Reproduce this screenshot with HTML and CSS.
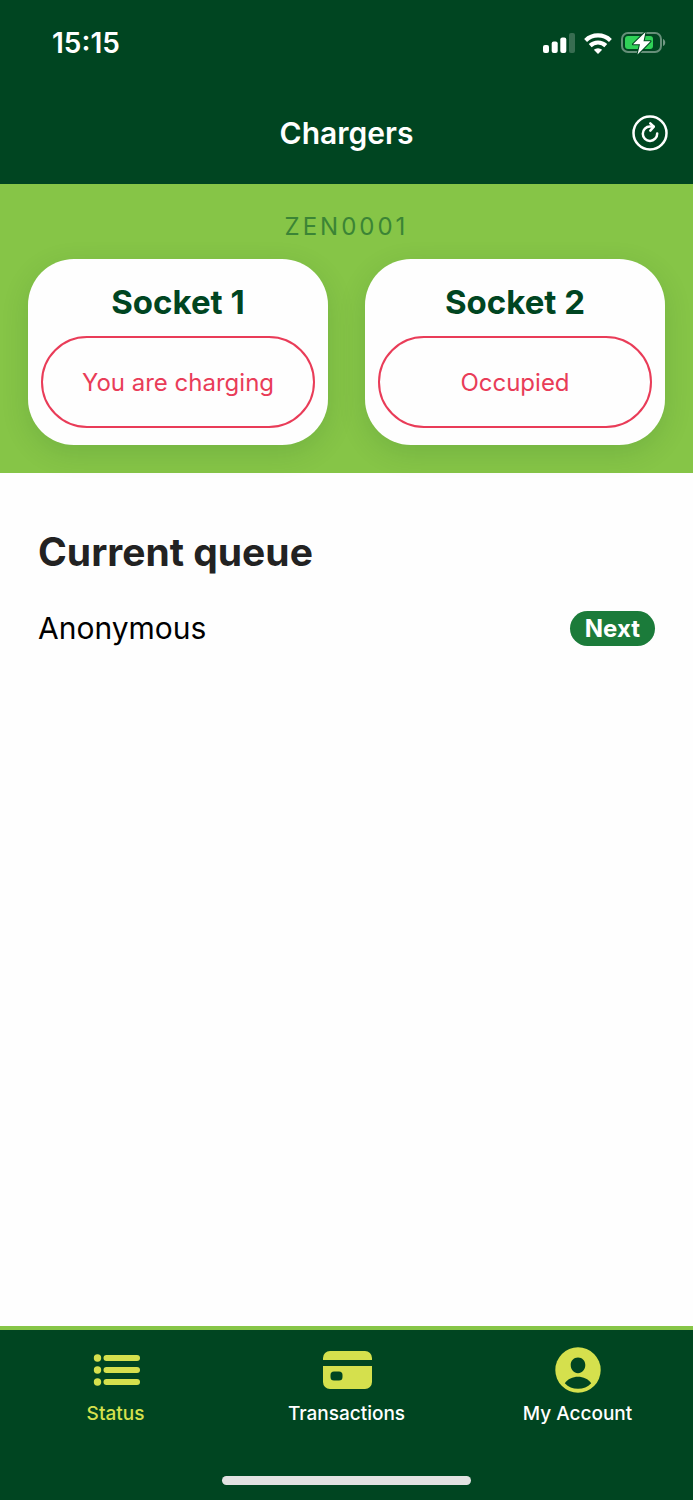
FILE: index.html
```html
<!DOCTYPE html>
<html lang="en">
<head>
    <meta charset="UTF-8">
    <meta name="viewport" content="width=device-width, initial-scale=1.0">
    <title>Chargers</title>
    <link rel="stylesheet" href="styles.css">
</head>
<body>
    <header class="header">
        <div class="status-bar">
            <span class="time">15:15</span>
            <div class="status-icons">
                <svg width="32" height="20" viewBox="0 0 32 20" fill="#fff">
                    <rect x="0" y="12" width="6" height="8" rx="2"/>
                    <rect x="8.700" y="8.500" width="6" height="11.500" rx="2"/>
                    <rect x="17.300" y="4.500" width="6" height="15.500" rx="2"/>
                    <rect x="26" y="0" width="6" height="20" rx="2" opacity="0.22"/>
                </svg>
                <svg width="28" height="21" viewBox="0 0 28 21" fill="none" stroke="#fff" stroke-width="4.200">
                    <path d="M1.600 7.400a18 18 0 0 1 24.800 0"/>
                    <path d="M6.200 12.600a11.400 11.400 0 0 1 15.600 0"/>
                    <path d="M14 21l-4.200-4.300a6.400 6.400 0 0 1 8.400 0z" fill="#fff" stroke="none"/>
                </svg>
                <svg width="45" height="24" viewBox="0 0 45 24">
                    <rect x="1" y="2" width="39" height="19" rx="6" fill="none" stroke="#fff" stroke-width="2" opacity="0.4"/>
                    <path d="M42 8c3 1 3 6 0 7z" fill="#fff" opacity="0.45"/>
                    <rect x="4" y="5" width="28" height="13" rx="3" fill="#30d158"/>
                    <path d="M24.500 1L12 13.200h7L16.500 23.500l13-13.200h-7z" fill="#fff" stroke="#004521" stroke-width="2" stroke-linejoin="round" paint-order="stroke"/>
                </svg>
            </div>
        </div>
        <div class="title-bar">
            <h1>Chargers</h1>
            <button class="refresh-btn" aria-label="Refresh">
                <svg width="36" height="36" viewBox="0 0 36 36" fill="none" stroke="#fff" stroke-width="2.500" stroke-linecap="round" stroke-linejoin="round">
                    <circle cx="18" cy="18" r="16.500"/>
                    <path d="M25.200 18.600a7.200 7.200 0 1 1-7.200-7.100h3.400"/>
                    <path d="M18.300 8.400l3.500 3.300-3.500 3.900"/>
                </svg>
            </button>
        </div>
    </header>

    <section class="charger">
        <p class="charger-id">ZEN0001</p>
        <div class="sockets">
            <div class="socket">
                <h2>Socket 1</h2>
                <button class="socket-btn">You are charging</button>
            </div>
            <div class="socket">
                <h2>Socket 2</h2>
                <button class="socket-btn">Occupied</button>
            </div>
        </div>
    </section>

    <main class="queue">
        <h2>Current queue</h2>
        <ul>
            <li>
                <span>Anonymous</span>
                <span class="badge">Next</span>
            </li>
        </ul>
    </main>

    <footer class="footer">
        <nav class="tabs">
            <a href="#status" class="tab active">
                <svg width="48" height="48" viewBox="0 0 48 48" fill="#d5e04d">
                    <circle cx="5.500" cy="12" r="3.700"/>
                    <circle cx="5.500" cy="24" r="3.700"/>
                    <circle cx="5.500" cy="36" r="3.700"/>
                    <rect x="11.500" y="9" width="36.500" height="6" rx="3"/>
                    <rect x="11.500" y="21" width="36.500" height="6" rx="3"/>
                    <rect x="11.500" y="33" width="36.500" height="6" rx="3"/>
                </svg>
                Status
            </a>
            <a href="#transactions" class="tab">
                <svg width="48" height="48" viewBox="0 0 48 48" fill="#d5e04d" overflow="visible">
                    <path d="M0 14V12a7 7 0 0 1 7-7h35a7 7 0 0 1 7 7v2z"/>
                    <path fill-rule="evenodd" d="M0 20h49V36a7 7 0 0 1-7 7H7a7 7 0 0 1-7-7zM11 25.500a3.500 3.500 0 0 0-3.500 3.500v2a3.500 3.500 0 0 0 3.500 3.500h5a3.500 3.500 0 0 0 3.500-3.500v-2a3.500 3.500 0 0 0-3.500-3.500z"/>
                </svg>
                Transactions
            </a>
            <a href="#account" class="tab">
                <svg width="48" height="48" viewBox="0 0 48 48">
                    <circle cx="24" cy="24" r="22.700" fill="#d5e04d"/>
                    <path d="M24 11.500c4.300 0 7.300 3.200 7.300 7.600 0 4.600-3.200 8.200-7.300 8.200s-7.300-3.600-7.300-8.200c0-4.400 3-7.600 7.300-7.600z" fill="#004521"/>
                    <path d="M10.800 37.200c2.800-4 8-6.400 13.200-6.400s10.400 2.400 13.200 6.400c-3.400 3.600-8 5.600-13.200 5.600s-9.800-2-13.200-5.600z" fill="#004521"/>
                </svg>
                My Account
            </a>
        </nav>
        <div class="home-indicator"></div>
    </footer>
</body>
</html>
```
FILE: styles.css
```css
* {
    margin: 0;
    padding: 0;
    box-sizing: border-box;
}

body {
    display: flex;
    flex-direction: column;
    min-height: 100vh;
    background-color: #fefefe;
    color: #000;
    font-family: Inter, "Liberation Sans", sans-serif;
}

button {
    font-family: inherit;
    background: none;
    border: none;
    cursor: pointer;
}

.header {
    background-color: #004521;
    color: #fff;
}

.status-bar {
    display: flex;
    justify-content: space-between;
    align-items: center;
    height: 82px;
    padding: 4px 27px 0 52px;
}

.time {
    font-size: 28px;
    font-weight: 600;
}

.status-icons {
    display: flex;
    align-items: center;
    gap: 9px;
}

.title-bar {
    display: grid;
    grid-template-columns: 1fr auto 1fr;
    align-items: center;
    height: 102px;
    padding: 0 25px;
}

.title-bar h1 {
    grid-column: 2;
    font-size: 30px;
    font-weight: 600;
}

.refresh-btn {
    justify-self: end;
    display: flex;
}

.charger {
    padding: 28px;
    background-color: #86c547;
}

.charger-id {
    margin-bottom: 17px;
    color: #3b8435;
    font-size: 24px;
    line-height: 30px;
    letter-spacing: 3px;
    text-align: center;
}

.sockets {
    display: grid;
    grid-template-columns: 1fr 1fr;
    gap: 37px;
}

.socket {
    padding: 23px 13px 17px;
    background-color: #fefefe;
    border-radius: 46px;
    box-shadow: 0 8px 28px rgba(0, 69, 33, 0.14);
    text-align: center;
}

.socket h2 {
    margin-bottom: 14px;
    color: #004521;
    font-size: 33px;
    font-weight: 700;
    line-height: 40px;
}

.socket-btn {
    width: 100%;
    height: 92px;
    border: 2px solid #e93c58;
    border-radius: 46px;
    color: #e93c58;
    font-size: 24px;
}

.queue {
    flex: 1;
    padding: 54px 38px;
}

.queue h2 {
    margin-bottom: 29px;
    color: #222;
    font-size: 39px;
    font-weight: 700;
    line-height: 50px;
}

.queue ul {
    list-style: none;
}

.queue li {
    display: flex;
    justify-content: space-between;
    align-items: center;
    font-size: 30px;
    line-height: 44px;
}

.badge {
    padding: 0 15px;
    background-color: #1b7b3a;
    border-radius: 18px;
    color: #fff;
    font-size: 24px;
    font-weight: 700;
    line-height: 35px;
}

.footer {
    padding: 16px 0 15px;
    background-color: #004521;
    border-top: 4px solid #86c547;
}

.tabs {
    display: grid;
    grid-template-columns: repeat(3, 1fr);
}

.tab {
    display: flex;
    flex-direction: column;
    align-items: center;
    gap: 8px;
    color: #fff;
    font-size: 19px;
    font-weight: 500;
    line-height: 24px;
    text-decoration: none;
}

.tab.active {
    color: #d5e04d;
}

.home-indicator {
    width: 36%;
    height: 9px;
    margin: 50px auto 0;
    background-color: #e2e2e2;
    border-radius: 5px;
}
```
